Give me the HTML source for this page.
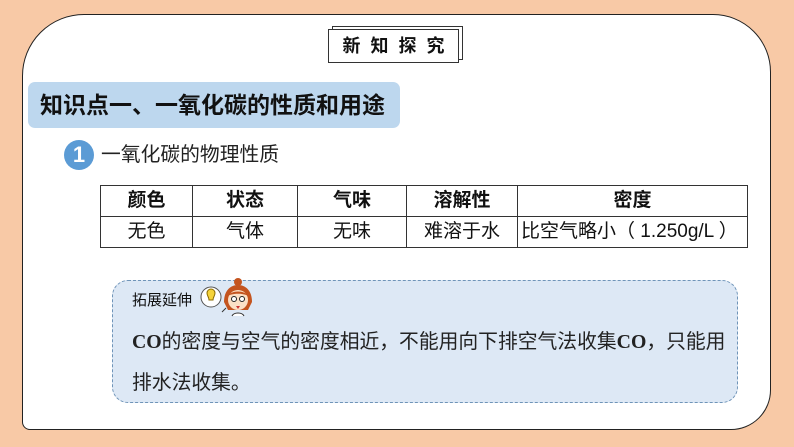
<!DOCTYPE html>
<html><head><meta charset="utf-8"><style>
*{margin:0;padding:0;box-sizing:border-box}
body{width:794px;height:447px;background:#f8c9a6;position:relative;overflow:hidden;font-family:"Liberation Sans","Noto Sans CJK SC",sans-serif;color:#111}
.card{position:absolute;left:22px;top:14px;width:749px;height:416px;background:#fff;border:1.3px solid #222;border-radius:62px 58px 40px 8px}
.tag{position:absolute;left:328px;top:29px;width:131px;height:34px;border:1.3px solid #333;background:#fff;font-size:18px;font-weight:bold;letter-spacing:10px;text-align:center;line-height:32px;padding-left:10px;box-shadow:4px -3px 0 -1px #fff,4px -3px 0 0 #333}
.band{position:absolute;left:28px;top:82px;width:372px;height:46px;background:#bdd7ee;border-radius:7px;font-size:23px;font-weight:bold;line-height:46px;padding-left:12px;white-space:nowrap}
.num{position:absolute;left:64px;top:140px;width:30px;height:30px;border-radius:50%;background:#5b9bd5;color:#fff;font-weight:bold;font-size:22px;text-align:center;line-height:30px}
.sub{position:absolute;left:101px;top:142px;font-size:19.8px;line-height:26px;color:#222}
table{position:absolute;left:100px;top:185px;border-collapse:collapse;font-size:19px}
td{border:1px solid #333;text-align:center;height:31px;padding:0;line-height:28px;white-space:nowrap}
tr:first-child td{font-weight:bold}
.box{position:absolute;left:112px;top:280px;width:626px;height:123px;background:#dde8f5;border:1.5px dashed #6f94b8;border-radius:16px}
.ext{position:absolute;left:132px;top:289px;font-size:15px}
.l{position:absolute;left:132px;font-size:19.8px;line-height:26px;color:#222;white-space:nowrap}
.l b{font-family:"Liberation Serif",serif}
</style></head><body>
<div class="card"></div>
<div class="tag">新知探究</div>
<div class="band">知识点一、一氧化碳的性质和用途</div>
<div class="num">1</div>
<div class="sub">一氧化碳的物理性质</div>
<table><tr><td style="width:92px">颜色</td><td style="width:105px">状态</td><td style="width:109px">气味</td><td style="width:111px">溶解性</td><td style="width:230px">密度</td></tr>
<tr><td>无色</td><td>气体</td><td>无味</td><td>难溶于水</td><td style="text-align:left;padding-left:3px">比空气略小（ 1.250g/L ）</td></tr></table>
<div class="box"></div>
<div class="ext">拓展延伸</div>
<svg style="position:absolute;left:198px;top:276px" width="56" height="42" viewBox="0 0 56 42">
<ellipse cx="13" cy="21" rx="10" ry="10" fill="#fff" stroke="#555"/>
<path d="M9 17a4 4 0 1 1 8 0c0 3-2 4-2 7h-4c0-3-2-4-2-7z" fill="#f5d33a" stroke="#8a6a00"/>
<circle cx="40" cy="6" r="4" fill="#c4541f"/>
<path d="M26 26c0-12 7-17 14-17s14 5 14 17l-4 8h-20z" fill="#c4541f"/>
<ellipse cx="40" cy="24" rx="10" ry="10" fill="#fbe0c6"/>
<path d="M30 20c3-6 17-6 20 0c-4-3-16-3-20 0z" fill="#c4541f"/>
<circle cx="36" cy="23" r="2.5" fill="#fff" stroke="#222"/><circle cx="44" cy="23" r="2.5" fill="#fff" stroke="#222"/>
<path d="M38 30h4l-2 3z" fill="#c33"/>
<path d="M34 40c2-4 10-4 12 0" fill="#fff" stroke="#333"/>
<path d="M24 36l4-4" stroke="#333" fill="none"/>
</svg>
<div class="l" style="top:329px"><b>CO</b>的密度与空气的密度相近，不能用向下排空气法收集<b>CO</b>，只能用</div>
<div class="l" style="top:370px">排水法收集。</div>
</body></html>
